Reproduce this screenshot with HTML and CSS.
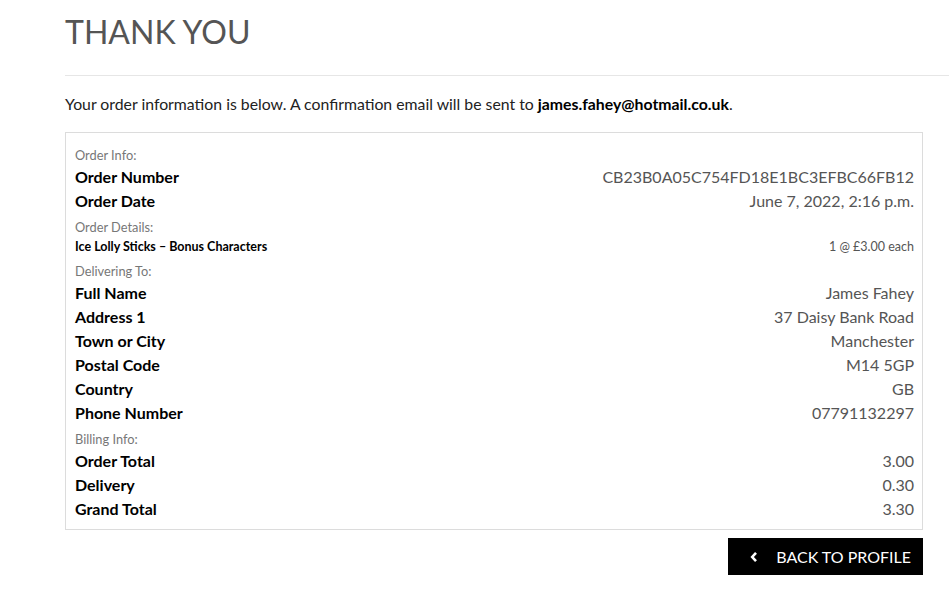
FILE: index.html
```html
<!DOCTYPE html>
<html lang="en">
<head>
<meta charset="utf-8">
<title>Thank You</title>
<link rel="stylesheet" href="styles.css">
</head>
<body>
<main class="page">
  <h1 class="title">THANK YOU</h1>
  <hr class="rule">
  <p class="intro">Your order information is below. A confirmation email will be sent to <strong>james.fahey@hotmail.co.uk</strong>.</p>
  <section class="order">
    <div class="section-label">Order Info:</div>
    <div class="row"><span class="key">Order Number</span><span class="val">CB23B0A05C754FD18E1BC3EFBC66FB12</span></div>
    <div class="row"><span class="key">Order Date</span><span class="val">June 7, 2022, 2:16 p.m.</span></div>
    <div class="section-label">Order Details:</div>
    <div class="row small"><span class="key">Ice Lolly Sticks – Bonus Characters</span><span class="val">1 @ £3.00 each</span></div>
    <div class="section-label">Delivering To:</div>
    <div class="row"><span class="key">Full Name</span><span class="val">James Fahey</span></div>
    <div class="row"><span class="key">Address 1</span><span class="val">37 Daisy Bank Road</span></div>
    <div class="row"><span class="key">Town or City</span><span class="val">Manchester</span></div>
    <div class="row"><span class="key">Postal Code</span><span class="val">M14 5GP</span></div>
    <div class="row"><span class="key">Country</span><span class="val">GB</span></div>
    <div class="row"><span class="key">Phone Number</span><span class="val">07791132297</span></div>
    <div class="section-label">Billing Info:</div>
    <div class="row"><span class="key">Order Total</span><span class="val">3.00</span></div>
    <div class="row"><span class="key">Delivery</span><span class="val">0.30</span></div>
    <div class="row"><span class="key">Grand Total</span><span class="val">3.30</span></div>
  </section>
  <div class="actions">
    <a class="btn" href="#"><svg class="chev" width="8" height="12" viewBox="0 0 8 12"><path d="M6 1.8 L2.2 6 L6 10.2" fill="none" stroke="#fff" stroke-width="2.6"/></svg><span>BACK TO PROFILE</span></a>
  </div>
</main>
</body>
</html>
```

FILE: styles.css
```css
html, body {
  margin: 0;
  padding: 0;
  background: #fff;
}
body {
  font-family: Lato, "Open Sans", Arial, sans-serif;
  color: #222;
}
.page {
  padding-left: 65px;
}
.title {
  margin: 0;
  padding-top: 12px;
  font-size: 32px;
  font-weight: 400;
  line-height: 40px;
  color: #555;
}
.rule {
  margin: 23px 0 0 0;
  border: 0;
  border-top: 1px solid #e6e6e6;
  height: 0;
}
.intro {
  margin: 16px 0 0 0;
  font-size: 15.8px;
  line-height: 24px;
  color: #222;
}
.intro strong {
  font-weight: 700;
  color: #000;
}
.order {
  margin-top: 16px;
  width: 858px;
  box-sizing: border-box;
  border: 1px solid #dcdcdc;
  padding: 8px 8px 8px 9px;
}
.section-label {
  font-size: 12.8px;
  line-height: 20px;
  font-weight: 400;
  color: #777;
  padding-top: 4px;
}
.row {
  display: flex;
  justify-content: space-between;
  align-items: center;
  font-size: 16px;
  line-height: 24px;
}
.row .key {
  font-weight: 700;
  color: #000;
}
.row .val {
  color: #555;
}
.row.small {
  font-size: 12.5px;
  line-height: 20px;
}
.actions {
  display: flex;
  justify-content: flex-end;
  width: 858px;
  margin-top: 8px;
}
.btn {
  display: flex;
  align-items: center;
  height: 37px;
  padding: 0 12px 0 22px;
  background: #000;
  color: #fff;
  text-decoration: none;
  font-size: 16px;
}
.chev {
  margin-right: 18px;
}
```
